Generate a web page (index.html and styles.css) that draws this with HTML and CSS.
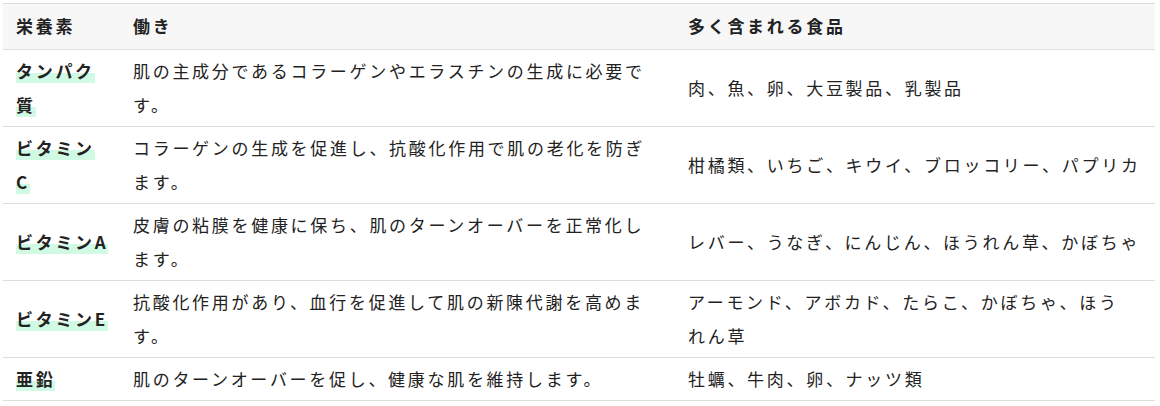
FILE: index.html
```html
<!DOCTYPE html>
<html lang="ja">
<head>
<meta charset="utf-8">
<link rel="stylesheet" href="styles.css">
</head>
<body>
<div class="wrap">
<table class="nutri">
<colgroup><col class="c1"><col class="c2"><col class="c3"></colgroup>
<thead>
<tr><th>栄養素</th><th>働き</th><th>多く含まれる食品</th></tr>
</thead>
<tbody>
<tr><td><span class="mark">タンパク質</span></td><td>肌の主成分であるコラーゲンやエラスチンの生成に必要です。</td><td>肉、魚、卵、大豆製品、乳製品</td></tr>
<tr><td><span class="mark">ビタミン<br>C</span></td><td>コラーゲンの生成を促進し、抗酸化作用で肌の老化を防ぎます。</td><td>柑橘類、いちご、キウイ、ブロッコリー、パプリカ</td></tr>
<tr><td><span class="mark">ビタミンA</span></td><td>皮膚の粘膜を健康に保ち、肌のターンオーバーを正常化します。</td><td>レバー、うなぎ、にんじん、ほうれん草、かぼちゃ</td></tr>
<tr><td><span class="mark">ビタミンE</span></td><td>抗酸化作用があり、血行を促進して肌の新陳代謝を高めます。</td><td>アーモンド、アボカド、たらこ、かぼちゃ、ほう<br>れん草</td></tr>
<tr><td><span class="mark">亜鉛</span></td><td>肌のターンオーバーを促し、健康な肌を維持します。</td><td>牡蠣、牛肉、卵、ナッツ類</td></tr>
</tbody>
</table>
</div>
</body>
</html>
```
FILE: styles.css
```css
html, body {
  margin: 0;
  padding: 0;
  background: #fff;
}
.wrap {
  padding: 3px 5px 0 3px;
}
.nutri {
  width: 1152px;
  table-layout: fixed;
  border-collapse: collapse;
  font-family: "Noto Sans CJK JP", sans-serif;
  font-size: 17px;
  letter-spacing: 2.7px;
  color: #222;
  border-top: 1px solid #dedede;
}
.c1 { width: 117px; }
.c2 { width: 555px; }
.c3 { width: 480px; }
.nutri th,
.nutri td {
  text-align: left;
  vertical-align: middle;
  line-height: 34px;
  padding: 4px 9px 4px 13px;
  border-bottom: 1px solid #dedede;
}
.nutri th {
  background: #f7f7f7;
  font-weight: 700;
  padding-top: 5px;
  padding-bottom: 6px;
}
.nutri td:nth-child(2) { padding-right: 20px; }
.nutri td:nth-child(3) { padding-right: 8px; }
.nutri td:first-child {
  font-weight: 700;
}
.mark {
  background: linear-gradient(transparent 60%, #d1fae5 60%);
}
```
